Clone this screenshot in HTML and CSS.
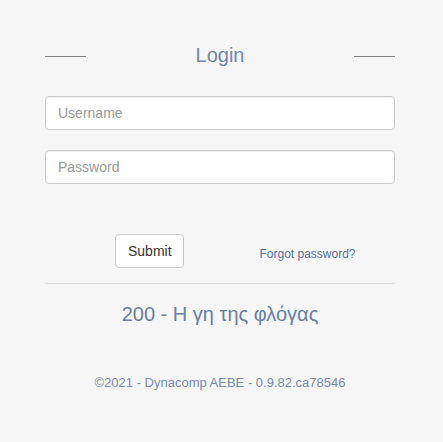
FILE: index.html
```html
<!DOCTYPE html>
<html>
<head>
<meta charset="utf-8">
<link rel="stylesheet" href="styles.css">
</head>
<body>
<div class="page">
  <div class="header">
    <span class="rule"></span>
    <h1 class="title">Login</h1>
    <span class="rule"></span>
  </div>
  <form class="form">
    <input class="field" type="text" placeholder="Username">
    <input class="field" type="password" placeholder="Password">
    <div class="actions">
      <div class="cell"><button class="btn" type="button">Submit</button></div>
      <div class="cell cell-right"><a class="forgot" href="#">Forgot password?</a></div>
    </div>
  </form>
  <hr class="divider">
  <div class="company">200 - Η γη της φλόγας</div>
  <div class="footer">©2021 - Dynacomp AEBE - 0.9.82.ca78546</div>
</div>
</body>
</html>
```
FILE: styles.css
```css
html, body {
  margin: 0;
  padding: 0;
  background: #f6f6f6;
  font-family: "Liberation Sans", Arial, sans-serif;
}
.page {
  width: 350px;
  padding: 0 48px 0 45px;
}
.header {
  display: flex;
  align-items: center;
  justify-content: space-between;
  height: 30px;
  margin-top: 40px;
}
.rule {
  display: block;
  width: 41px;
  height: 1px;
  background: #808080;
  margin-top: 2px;
}
.title {
  margin: 0;
  font-size: 20px;
  font-weight: normal;
  color: #7187a6;
  line-height: 30px;
}
.form {
  display: flex;
  flex-direction: column;
  gap: 20px;
  margin-top: 26px;
}
.field {
  box-sizing: border-box;
  width: 350px;
  height: 34px;
  padding: 6px 12px;
  font-family: inherit;
  font-size: 14px;
  color: #555;
  background: #fff;
  border: 1px solid #ccc;
  border-radius: 4px;
  box-shadow: inset 0 1px 1px rgba(0,0,0,.075);
  outline: none;
}
.field::placeholder {
  color: #999;
}
.actions {
  display: grid;
  grid-template-columns: 1fr 1fr;
  margin-top: 30px;
}
.cell {
  display: flex;
  align-items: center;
}
.cell-right {
  justify-content: center;
  padding-top: 6px;
}
.btn {
  margin-left: 70px;
  box-sizing: border-box;
  height: 34px;
  width: 69px;
  padding: 6px 12px;
  font-family: inherit;
  font-size: 14px;
  color: #333;
  background: #fff;
  border: 1px solid #ccc;
  border-radius: 4px;
}
.forgot {
  font-size: 12px;
  color: #5a7193;
  text-decoration: none;
}
.divider {
  margin: 15px 0 0;
  border: 0;
  border-top: 1px solid #ddd;
}
.company {
  margin-top: 18px;
  text-align: center;
  font-size: 20px;
  color: #6a7f9e;
  line-height: 24px;
}
.footer {
  margin-top: 49px;
  text-align: center;
  font-size: 13px;
  color: #7a8aa6;
}
```
